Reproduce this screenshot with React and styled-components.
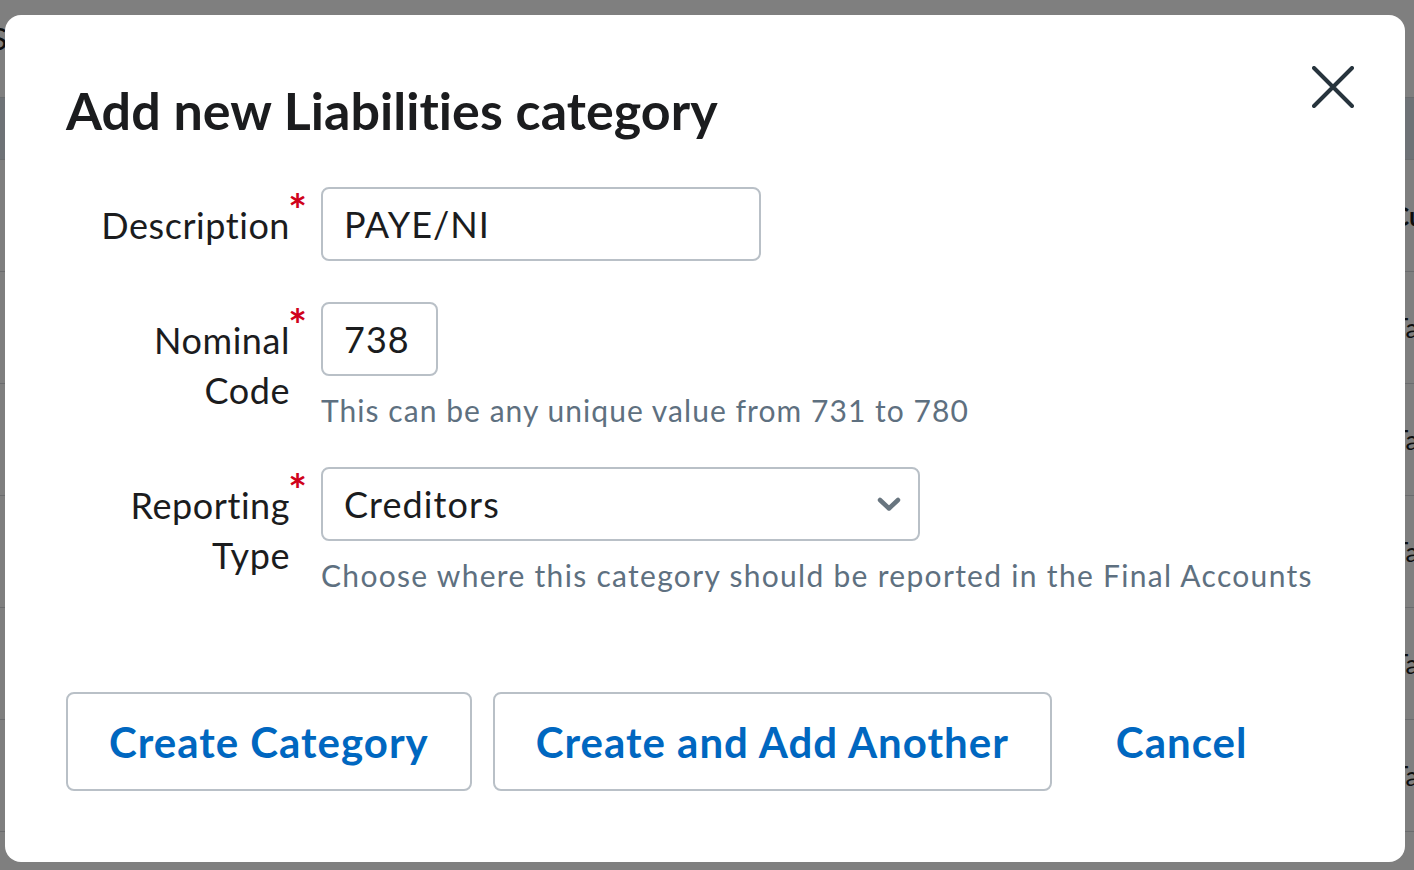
import React from "react";
import styled, { createGlobalStyle } from "styled-components";

const GlobalStyle = createGlobalStyle`
  html, body { margin: 0; padding: 0; }
  body {
    font-family: Lato, "Liberation Sans", sans-serif;
    background: #ffffff;
    overflow: hidden;
    color: #1b1c1e;
  }
  * { box-sizing: border-box; }
`;

/* ---------- background page (dimmed) ---------- */
const Page = styled.div`
  width: 1414px;
  height: 870px;
  background: #ffffff;
  overflow: hidden;
`;

const PageHeader = styled.div`
  height: 97px;
  padding-top: 22px;
`;

const PageTitle = styled.h1`
  margin: 0 0 0 -9px;
  font-size: 30px;
  font-weight: 400;
  line-height: 32px;
  color: #1b1c1e;
`;

const TableHead = styled.div`
  height: 63px;
  background: #dde4ec;
  border-top: 1px solid #d3d8dd;
  border-bottom: 1px solid #d3d8dd;
`;

const TableRow = styled.div`
  height: 112px;
  border-bottom: 1px solid #d6d9dc;
  display: flex;
  align-items: center;
  padding-left: ${(p) => p.$indent}px;
  font-size: 26px;
  font-weight: ${(p) => (p.$bold ? 700 : 400)};
  white-space: nowrap;
  color: #1b1c1e;
`;

/* ---------- modal ---------- */
const Overlay = styled.div`
  position: fixed;
  inset: 0;
  background: rgba(0, 0, 0, 0.5);
  padding: 15px 9px 8px 5px;
  display: flex;
`;

const Modal = styled.div`
  flex: 1;
  background: #ffffff;
  border-radius: 16px;
  padding: 51px 51px 0 61px;
  display: flex;
  flex-direction: column;
`;

const Header = styled.div`
  display: flex;
  justify-content: space-between;
  align-items: flex-start;
`;

const Title = styled.h2`
  margin: 13px 0 0;
  font-size: 52px;
  font-weight: 700;
  line-height: 62px;
  color: #1b1c1e;
  letter-spacing: 0.05px;
`;

const CloseButton = styled.button`
  width: 42px;
  height: 42px;
  padding: 0;
  border: none;
  background: transparent;
  cursor: pointer;
  display: flex;
  align-items: center;
  justify-content: center;
`;

const Form = styled.div`
  margin-top: 46px;
  display: flex;
  flex-direction: column;
  gap: 37px;
`;

const Row = styled.div`
  display: grid;
  grid-template-columns: 239px 1fr;
  column-gap: 16px;
  align-items: start;
  margin-bottom: ${(p) => p.$extra || 0}px;
`;

const Label = styled.label`
  display: flex;
  justify-content: flex-end;
  align-items: flex-start;
`;

const LabelText = styled.span`
  text-align: right;
  padding-top: 13px;
  font-size: 36px;
  line-height: 50px;
  letter-spacing: 0.55px;
  color: #1b1c1e;
`;

const Required = styled.span`
  width: 15px;
  margin-top: 2px;
  display: flex;
  justify-content: center;
  font-size: 44px;
  line-height: 40px;
  font-weight: 700;
  color: #d0021b;
`;

const Field = styled.div`
  display: flex;
  flex-direction: column;
  align-items: flex-start;
`;

const TextInput = styled.input`
  width: ${(p) => p.$width}px;
  height: 74px;
  border: 2px solid #b9c0c7;
  border-radius: 8px;
  padding: 0 21px;
  font-family: inherit;
  font-size: 36px;
  letter-spacing: 1px;
  color: #1b1c1e;
  background: #ffffff;
  outline: none;
`;

const SelectBox = styled.div`
  width: ${(p) => p.$width}px;
  height: 74px;
  border: 2px solid #b9c0c7;
  border-radius: 8px;
  padding: 0 17px 0 21px;
  display: flex;
  align-items: center;
  justify-content: space-between;
  font-size: 36px;
  letter-spacing: 1.1px;
  color: #1b1c1e;
  background: #ffffff;
`;

const Help = styled.div`
  margin-top: 14px;
  font-size: 30px;
  line-height: 40px;
  letter-spacing: ${(p) => p.$spacing || 1.05}px;
  color: #5e7080;
  white-space: nowrap;
`;

const Actions = styled.div`
  margin-top: 97px;
  display: flex;
  gap: 21px;
`;

const Button = styled.button`
  height: 99px;
  padding: 0 41px;
  border: 2px solid ${(p) => (p.$plain ? "transparent" : "#b9c0c7")};
  border-radius: 8px;
  background: #ffffff;
  color: #0067c0;
  font-family: inherit;
  font-size: 42px;
  font-weight: 700;
  letter-spacing: 1px;
  cursor: pointer;
  white-space: nowrap;
`;

const CloseIcon = () => (
  <svg width="42" height="42" viewBox="0 0 42 42" fill="none">
    <path
      d="M2 2L40 40M40 2L2 40"
      stroke="#27343d"
      strokeWidth="4"
      strokeLinecap="round"
    />
  </svg>
);

const Chevron = () => (
  <svg width="24" height="15" viewBox="0 0 24 15" fill="none">
    <path
      d="M3 3L12 11.5L21 3"
      stroke="#68757f"
      strokeWidth="4.5"
      strokeLinecap="round"
      strokeLinejoin="round"
    />
  </svg>
);

export default function App() {
  return (
    <>
      <GlobalStyle />
      <Page>
        <PageHeader>
          <PageTitle>Settings</PageTitle>
        </PageHeader>
        <TableHead />
        <TableRow $indent={1392} $bold>Current Liabilities</TableRow>
        <TableRow $indent={1393}>Taxation</TableRow>
        <TableRow $indent={1393}>Taxation</TableRow>
        <TableRow $indent={1393}>Taxation</TableRow>
        <TableRow $indent={1393}>Taxation</TableRow>
        <TableRow $indent={1393}>Taxation</TableRow>
      </Page>

      <Overlay>
        <Modal role="dialog" aria-label="Add new Liabilities category">
          <Header>
            <Title>Add new Liabilities category</Title>
            <CloseButton aria-label="Close">
              <CloseIcon />
            </CloseButton>
          </Header>

          <Form>
            <Row $extra={4}>
              <Label>
                <LabelText>Description</LabelText>
                <Required>*</Required>
              </Label>
              <Field>
                <TextInput $width={440} defaultValue="PAYE/NI" />
              </Field>
            </Row>

            <Row>
              <Label>
                <LabelText>
                  Nominal
                  <br />
                  Code
                </LabelText>
                <Required>*</Required>
              </Label>
              <Field>
                <TextInput $width={117} defaultValue="738" />
                <Help>This can be any unique value from 731 to 780</Help>
              </Field>
            </Row>

            <Row>
              <Label>
                <LabelText>
                  Reporting
                  <br />
                  Type
                </LabelText>
                <Required>*</Required>
              </Label>
              <Field>
                <SelectBox $width={599}>
                  <span>Creditors</span>
                  <Chevron />
                </SelectBox>
                <Help $spacing={1.3}>
                  Choose where this category should be reported in the Final
                  Accounts
                </Help>
              </Field>
            </Row>
          </Form>

          <Actions>
            <Button>Create Category</Button>
            <Button>Create and Add Another</Button>
            <Button $plain>Cancel</Button>
          </Actions>
        </Modal>
      </Overlay>
    </>
  );
}
